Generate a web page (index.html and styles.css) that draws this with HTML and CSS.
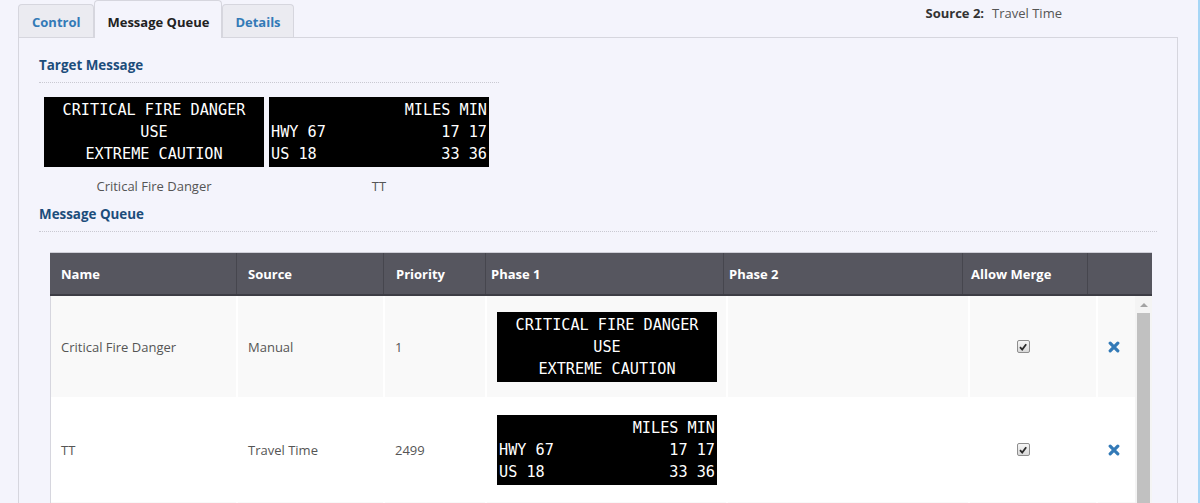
FILE: index.html
```html
<!DOCTYPE html>
<html lang="en">
<head>
<meta charset="utf-8">
<title>Message Queue</title>
<link rel="stylesheet" href="styles.css">
</head>
<body>
<div class="app">
  <div class="main">
    <div class="topbar">
      <ul class="tabs">
        <li class="tab tab-control">Control</li>
        <li class="tab active">Message Queue</li>
        <li class="tab">Details</li>
      </ul>
      <div class="source"><span class="source-label">Source 2:</span><span class="source-value">Travel Time</span></div>
    </div>

    <div class="panel">
      <h3 class="section-title narrow">Target Message</h3>
      <div class="targets">
        <div class="target-item">
          <div class="sign centered">
            <div class="sign-line">CRITICAL FIRE DANGER</div>
            <div class="sign-line">USE</div>
            <div class="sign-line">EXTREME CAUTION</div>
          </div>
          <div class="caption">Critical Fire Danger</div>
        </div>
        <div class="target-item">
          <div class="sign">
            <div class="sign-line split"><span></span><span>MILES MIN</span></div>
            <div class="sign-line split"><span>HWY 67</span><span>17 17</span></div>
            <div class="sign-line split"><span>US 18</span><span>33 36</span></div>
          </div>
          <div class="caption">TT</div>
        </div>
      </div>

      <h3 class="section-title">Message Queue</h3>

      <div class="queue">
        <div class="thead">
          <div class="th th-name">Name</div>
          <div class="th th-source">Source</div>
          <div class="th th-priority">Priority</div>
          <div class="th th-phase">Phase 1</div>
          <div class="th th-phase">Phase 2</div>
          <div class="th th-merge">Allow Merge</div>
          <div class="th"></div>
        </div>
        <div class="tbody">
          <div class="rows">
            <div class="row odd">
              <div class="td">Critical Fire Danger</div>
              <div class="td">Manual</div>
              <div class="td">1</div>
              <div class="td td-sign">
                <div class="sign centered">
                  <div class="sign-line">CRITICAL FIRE DANGER</div>
                  <div class="sign-line">USE</div>
                  <div class="sign-line">EXTREME CAUTION</div>
                </div>
              </div>
              <div class="td"></div>
              <div class="td td-check"><span class="check"><svg viewBox="0 0 10 10" width="10" height="10"><path d="M2 5.2 L4.2 7.6 L8.2 2.2" fill="none" stroke="#2b2b2b" stroke-width="1.8"/></svg></span></div>
              <div class="td td-remove"><svg class="remove" viewBox="0 0 12 12" width="12" height="12"><path d="M2.2 2.2 L9.8 9.8 M9.8 2.2 L2.2 9.8" stroke="#337ab7" stroke-width="3.2" stroke-linecap="round"/></svg></div>
            </div>
            <div class="row even">
              <div class="td">TT</div>
              <div class="td">Travel Time</div>
              <div class="td">2499</div>
              <div class="td td-sign">
                <div class="sign">
                  <div class="sign-line split"><span></span><span>MILES MIN</span></div>
                  <div class="sign-line split"><span>HWY 67</span><span>17 17</span></div>
                  <div class="sign-line split"><span>US 18</span><span>33 36</span></div>
                </div>
              </div>
              <div class="td"></div>
              <div class="td td-check"><span class="check"><svg viewBox="0 0 10 10" width="10" height="10"><path d="M2 5.2 L4.2 7.6 L8.2 2.2" fill="none" stroke="#2b2b2b" stroke-width="1.8"/></svg></span></div>
              <div class="td td-remove"><svg class="remove" viewBox="0 0 12 12" width="12" height="12"><path d="M2.2 2.2 L9.8 9.8 M9.8 2.2 L2.2 9.8" stroke="#337ab7" stroke-width="3.2" stroke-linecap="round"/></svg></div>
            </div>
            <div class="row odd">
              <div class="td"></div>
              <div class="td"></div>
              <div class="td"></div>
              <div class="td"></div>
              <div class="td"></div>
              <div class="td"></div>
              <div class="td"></div>
            </div>
          </div>
          <div class="scrollbar">
            <span class="scroll-arrow"></span>
            <span class="scroll-thumb"></span>
          </div>
        </div>
      </div>
    </div>
  </div>
  <div class="edge"></div>
</div>
</body>
</html>
```

FILE: styles.css
```css
html, body {
  margin: 0;
  padding: 0;
  height: 100%;
  overflow: hidden;
}

body {
  background: #f4f4fc;
  font-family: "Open Sans", "Noto Sans", sans-serif;
  font-size: 13px;
  color: #555;
}

.app {
  display: flex;
  height: 503px;
  overflow: hidden;
}

.main {
  flex: 1;
  padding: 0 20px 0 18px;
  display: flex;
  flex-direction: column;
}

.edge {
  width: 2px;
  background: #a6d6f6;
}

/* ---------- top bar / tabs ---------- */
.topbar {
  height: 38px;
  display: flex;
  justify-content: space-between;
  position: relative;
  z-index: 2;
}

.tabs {
  display: flex;
  align-items: flex-end;
  list-style: none;
  margin: 0;
  padding: 0;
}

.tab {
  height: 32px;
  line-height: 35px;
  padding: 0 12px;
  border: 1px solid #d6d6de;
  border-bottom: none;
  border-radius: 4px 4px 0 0;
  background: #ebebf1;
  color: #337ab7;
  font-weight: 700;
  font-size: 13px;
}

.tab.tab-control {
  padding: 0 13px;
}

.tab.active {
  box-sizing: content-box;
  padding: 4px 12px 0 12px;
  height: 33px;
  line-height: 34px;
  margin-bottom: -1px;
  background: #f4f4fc;
  color: #222;
}

.source {
  margin: 3px 116px 0 0;
  line-height: 20px;
  font-size: 13px;
}

.source-label {
  font-weight: 700;
  color: #333;
  margin-right: 8px;
}

.source-value {
  color: #555;
}

/* ---------- panel ---------- */
.panel {
  flex: 1;
  border: 1px solid #d6d6de;
  border-bottom: none;
  padding: 18px 20px 0 20px;
}

.section-title {
  margin: 0;
  font-size: 13.4px;
  line-height: 18px;
  font-weight: 700;
  color: #1c4d7b;
  padding-bottom: 8px;
  border-bottom: 1px dotted #c9c9d2;
}

.section-title.narrow {
  width: 460px;
}

.targets {
  display: flex;
  gap: 5px;
  margin: 14px 0 10px 5px;
}

.target-item {
  width: 220px;
}

.caption {
  margin-top: 10px;
  line-height: 18px;
  text-align: center;
  color: #555;
}

/* ---------- sign ---------- */
.sign {
  width: 220px;
  height: 70px;
  box-sizing: border-box;
  padding: 2px 2px 0 2px;
  background: #000;
  color: #fff;
  font-family: "DejaVu Sans Mono", "Liberation Mono", monospace;
  font-size: 15.2px;
  line-height: 22px;
}

.sign-line {
  white-space: pre;
}

.sign.centered {
  text-align: center;
}

.sign-line.split {
  display: flex;
  justify-content: space-between;
}

/* ---------- queue table ---------- */
.queue {
  margin: 20px 0 0 11px;
  width: 1102px;
}

.thead {
  display: grid;
  grid-template-columns: 186px 147px 102px 238px 239px 125px 65px;
  height: 41px;
  border-top: 1px solid #cfcfd8;
  border-bottom: 2px solid #3d3d45;
  background: #56565f;
}

.th {
  display: flex;
  align-items: center;
  padding: 1px 0 0 11px;
  border-left: 1px solid #46464e;
  color: #fff;
  font-weight: 700;
  font-size: 13px;
}

.th:first-child {
  border-left: none;
}

.th-source { padding-left: 11px; }
.th-priority { padding-left: 12px; }
.th-phase { padding-left: 5px; }
.th-merge { padding-left: 8px; }

.tbody {
  display: flex;
  border-left: 1px solid #d6d6de;
  background: #fff;
}

.rows {
  flex: 1;
  display: flex;
  flex-direction: column;
  gap: 2px;
}

.row {
  display: grid;
  grid-template-columns: 185px 145px 100px 239px 240px 126px 37px;
  column-gap: 2px;
  height: 101px;
}

.td {
  display: flex;
  align-items: center;
  padding: 1px 0 0 10px;
  color: #555;
}

.row.odd .td {
  background: #f9f9f9;
}

.row.even .td {
  background: #fff;
}

.td-check {
  justify-content: center;
  padding: 0 20px 0 0;
}

.check {
  width: 11px;
  height: 11px;
  border: 1px solid #8e8e8e;
  border-radius: 2px;
  background: linear-gradient(#f6f6f6, #d9d9d9);
  display: flex;
  align-items: center;
  justify-content: center;
}

.remove {
  display: block;
}

.scrollbar {
  width: 17px;
  background: #f4f4f4;
  display: flex;
  flex-direction: column;
  align-items: center;
}

.scroll-arrow {
  margin-top: 7px;
  width: 0;
  height: 0;
  border-left: 4px solid transparent;
  border-right: 4px solid transparent;
  border-bottom: 4px solid #a3a3a3;
}

.scroll-thumb {
  margin-top: 6px;
  width: 13px;
  flex: 1;
  background: #c1c1c1;
}
```
